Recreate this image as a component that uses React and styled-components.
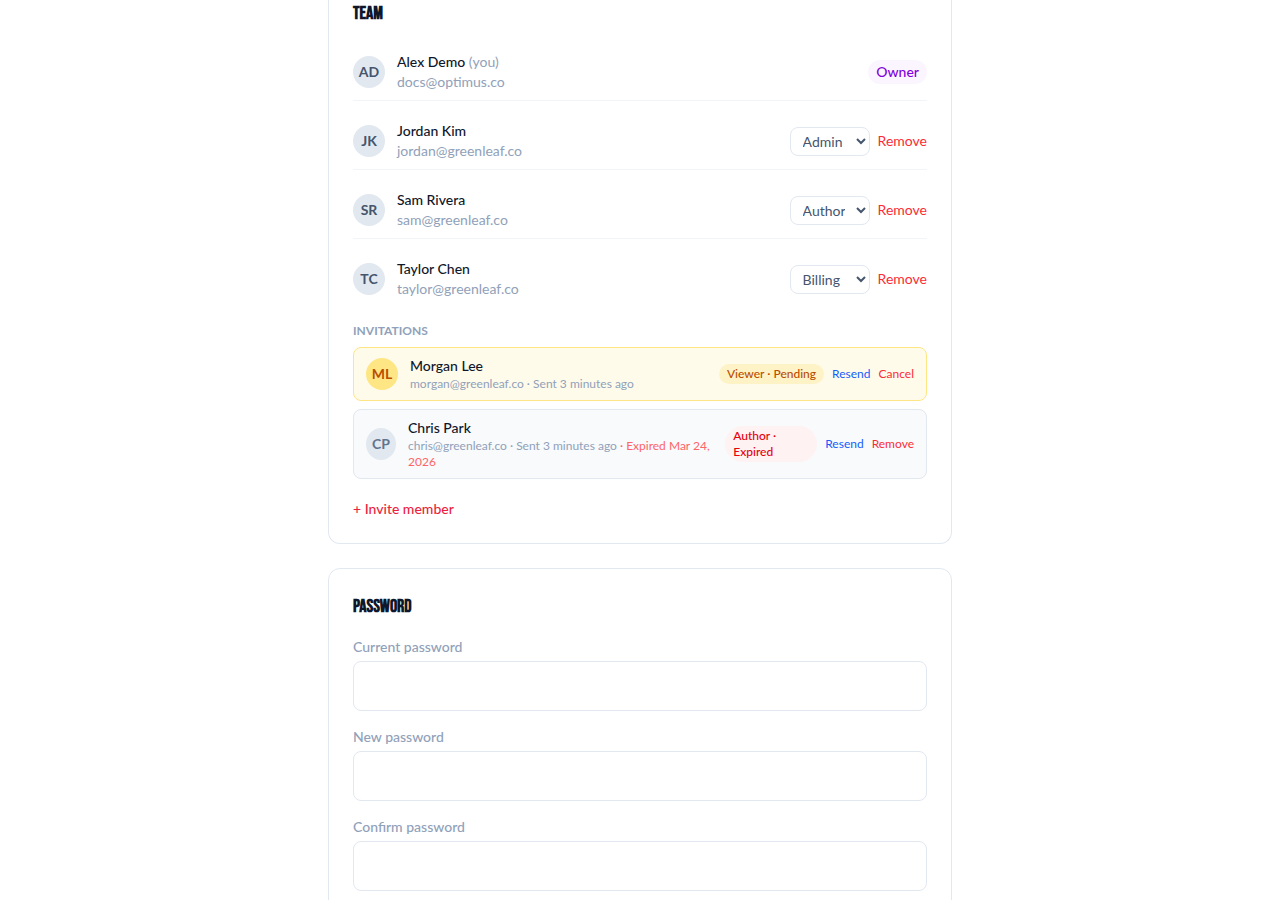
import styled, { createGlobalStyle } from "styled-components"


const EstiloGlobal = createGlobalStyle`
    * {
        box-sizing: border-box;
        margin: 0;
    }
    body {
        background-color: #fff;
        color: #0f172b;
        font-family: Lato, Roboto, "Liberation Sans", sans-serif;
        font-size: 14px;
        line-height: 20px;
    }
    button, input, select {
        font-family: inherit;
    }
    ul {
        list-style: none;
        padding: 0;
    }
`

const Page = styled.main`
    max-width: 624px;
    margin: 0 auto;
    display: flex;
    flex-direction: column;
    gap: 24px;
`

const Card = styled.section`
    background-color: #fff;
    border: 1px solid #e2e8f0;
    border-radius: ${(props) => (props.$continued ? "0 0 12px 12px" : "12px")};
    border-top-width: ${(props) => (props.$continued ? "0" : "1px")};
    padding: ${(props) => (props.$continued ? "0 24px 24px" : "24px")};
`

const CardTitle = styled.h2`
    font-family: "Bebas Neue", "Liberation Sans Narrow", "Liberation Sans", sans-serif;
    font-size: 18px;
    font-weight: 700;
    line-height: 28px;
    text-transform: uppercase;
    margin-bottom: 16px;
`

const MemberList = styled.ul`
    display: flex;
    flex-direction: column;
    gap: 12px;
`

const MemberRow = styled.li`
    display: flex;
    align-items: center;
    gap: 12px;
    padding: 8px 0;
    border-bottom: 1px solid #f1f5f9;

    &:last-child {
        border-bottom: 0;
    }
`

const avatarTones = {
    member: { bg: "#e2e8f0", color: "#45556c" },
    pending: { bg: "#fee685", color: "#bb4d00" },
    expired: { bg: "#e2e8f0", color: "#62748e" },
}

const Avatar = styled.div`
    width: ${(props) => (props.$tone === "expired" ? "30px" : "32px")};
    height: 32px;
    flex-shrink: 0;
    border-radius: 50%;
    display: flex;
    align-items: center;
    justify-content: center;
    font-weight: 700;
    background-color: ${(props) => avatarTones[props.$tone].bg};
    color: ${(props) => avatarTones[props.$tone].color};
`

const Info = styled.div`
    flex: 1;
    min-width: 0;
`

const Name = styled.p`
    font-weight: 500;
`

const You = styled.span`
    font-weight: 400;
    color: #90a1b9;
`

const Email = styled.p`
    color: #90a1b9;
`

const Details = styled.p`
    font-size: 12px;
    line-height: 16px;
    color: #90a1b9;
`

const ExpiredOn = styled.span`
    color: #ff6467;
`

const Actions = styled.div`
    display: flex;
    align-items: center;
    gap: 8px;
`

const RoleSelect = styled.select`
    width: 80px;
    height: 29px;
    padding: 4px 8px;
    border: 1px solid #e2e8f0;
    border-radius: 8px;
    background-color: #fff;
    color: #45556c;
    font-size: 14px;
`

const badgeTones = {
    owner: { bg: "#faf5ff", color: "#8200db" },
    pending: { bg: "#fef3c6", color: "#bb4d00" },
    expired: { bg: "#fef2f2", color: "#e7000b" },
}

const Badge = styled.span`
    width: ${(props) => (props.$tone === "expired" ? "92px" : "auto")};
    padding: 2px 8px;
    border-radius: 18px;
    font-size: ${(props) => (props.$tone === "owner" ? "14px" : "12px")};
    line-height: ${(props) => (props.$tone === "owner" ? "20px" : "16px")};
    font-weight: 500;
    background-color: ${(props) => badgeTones[props.$tone].bg};
    color: ${(props) => badgeTones[props.$tone].color};
`

const TextButton = styled.button`
    padding: 0;
    border: 0;
    background: none;
    cursor: pointer;
    font-size: ${(props) => (props.$small ? "12px" : "14px")};
    line-height: ${(props) => (props.$small ? "16px" : "20px")};
    color: ${(props) => (props.$blue ? "#155dfc" : "#fb2c36")};
`

const Subtitle = styled.h3`
    margin: 16px 0 8px;
    font-size: 12px;
    font-weight: 700;
    line-height: 16px;
    text-transform: uppercase;
    color: #90a1b9;
`

const InviteList = styled.ul`
    display: flex;
    flex-direction: column;
    gap: 8px;
`

const InviteRow = styled.li`
    display: flex;
    align-items: center;
    gap: 12px;
    padding: 8px 12px;
    border: 1px solid ${(props) => (props.$tone === "pending" ? "#fee685" : "#e2e8f0")};
    border-radius: 8px;
    background-color: ${(props) => (props.$tone === "pending" ? "#fffbeb" : "#f8fafc")};
`

const InviteButton = styled.button`
    display: block;
    margin-top: 20px;
    padding: 0;
    border: 0;
    background: none;
    cursor: pointer;
    font-size: 14px;
    font-weight: 500;
    line-height: 20px;
    color: #ec1f41;
`

const PasswordForm = styled.form`
    display: flex;
    flex-direction: column;
    gap: 16px;
`

const Field = styled.div`
    display: flex;
    flex-direction: column;
    gap: 4px;
`

const Label = styled.label`
    font-weight: 500;
    color: #90a1b9;
`

const Input = styled.input`
    width: 100%;
    height: 50px;
    padding: 12px 16px;
    border: 1px solid #e2e8f0;
    border-radius: 8px;
    background-color: #fff;
    font-size: 16px;
`

const members = [
    { initials: "AD", name: "Alex Demo", email: "docs@optimus.co", role: "Owner", you: true },
    { initials: "JK", name: "Jordan Kim", email: "jordan@greenleaf.co", role: "Admin" },
    { initials: "SR", name: "Sam Rivera", email: "sam@greenleaf.co", role: "Author" },
    { initials: "TC", name: "Taylor Chen", email: "taylor@greenleaf.co", role: "Billing" },
]

const invitations = [
    { initials: "ML", name: "Morgan Lee", email: "morgan@greenleaf.co", badge: "Viewer · Pending", tone: "pending", action: "Cancel" },
    { initials: "CP", name: "Chris Park", email: "chris@greenleaf.co", badge: "Author · Expired", tone: "expired", action: "Remove", expired: "Mar 24, 2026" },
]

const roles = ["Admin", "Author", "Billing", "Viewer"]

const fields = [
    { id: "current-password", label: "Current password" },
    { id: "new-password", label: "New password" },
    { id: "confirm-password", label: "Confirm password" },
]

const Member = ({ member }) => {
    return (
        <MemberRow>
            <Avatar $tone="member">{member.initials}</Avatar>
            <Info>
                <Name>{member.name}{member.you && <You> (you)</You>}</Name>
                <Email>{member.email}</Email>
            </Info>
            {member.you ? (
                <Badge $tone="owner">{member.role}</Badge>
            ) : (
                <Actions>
                    <RoleSelect aria-label={`Role for ${member.name}`} defaultValue={member.role}>
                        {roles.map((role) => <option key={role}>{role}</option>)}
                    </RoleSelect>
                    <TextButton type="button">Remove</TextButton>
                </Actions>
            )}
        </MemberRow>
    )
}

const Invitation = ({ invite }) => {
    return (
        <InviteRow $tone={invite.tone}>
            <Avatar $tone={invite.tone}>{invite.initials}</Avatar>
            <Info>
                <Name>{invite.name}</Name>
                <Details>
                    {`${invite.email} · Sent 3 minutes ago`}
                    {invite.expired && <ExpiredOn>{` · Expired ${invite.expired}`}</ExpiredOn>}
                </Details>
            </Info>
            <Actions>
                <Badge $tone={invite.tone}>{invite.badge}</Badge>
                <TextButton type="button" $small $blue>Resend</TextButton>
                <TextButton type="button" $small>{invite.action}</TextButton>
            </Actions>
        </InviteRow>
    )
}

const App = () => {
    return (
        <>
            <EstiloGlobal />
            <Page>
                <Card $continued>
                    <CardTitle>Team</CardTitle>
                    <MemberList>
                        {members.map((member) => <Member key={member.email} member={member} />)}
                    </MemberList>
                    <Subtitle>Invitations</Subtitle>
                    <InviteList>
                        {invitations.map((invite) => <Invitation key={invite.email} invite={invite} />)}
                    </InviteList>
                    <InviteButton type="button">+ Invite member</InviteButton>
                </Card>

                <Card>
                    <CardTitle>Password</CardTitle>
                    <PasswordForm>
                        {fields.map((field) => (
                            <Field key={field.id}>
                                <Label htmlFor={field.id}>{field.label}</Label>
                                <Input type="password" id={field.id} />
                            </Field>
                        ))}
                    </PasswordForm>
                </Card>
            </Page>
        </>
    )
}

export default App
